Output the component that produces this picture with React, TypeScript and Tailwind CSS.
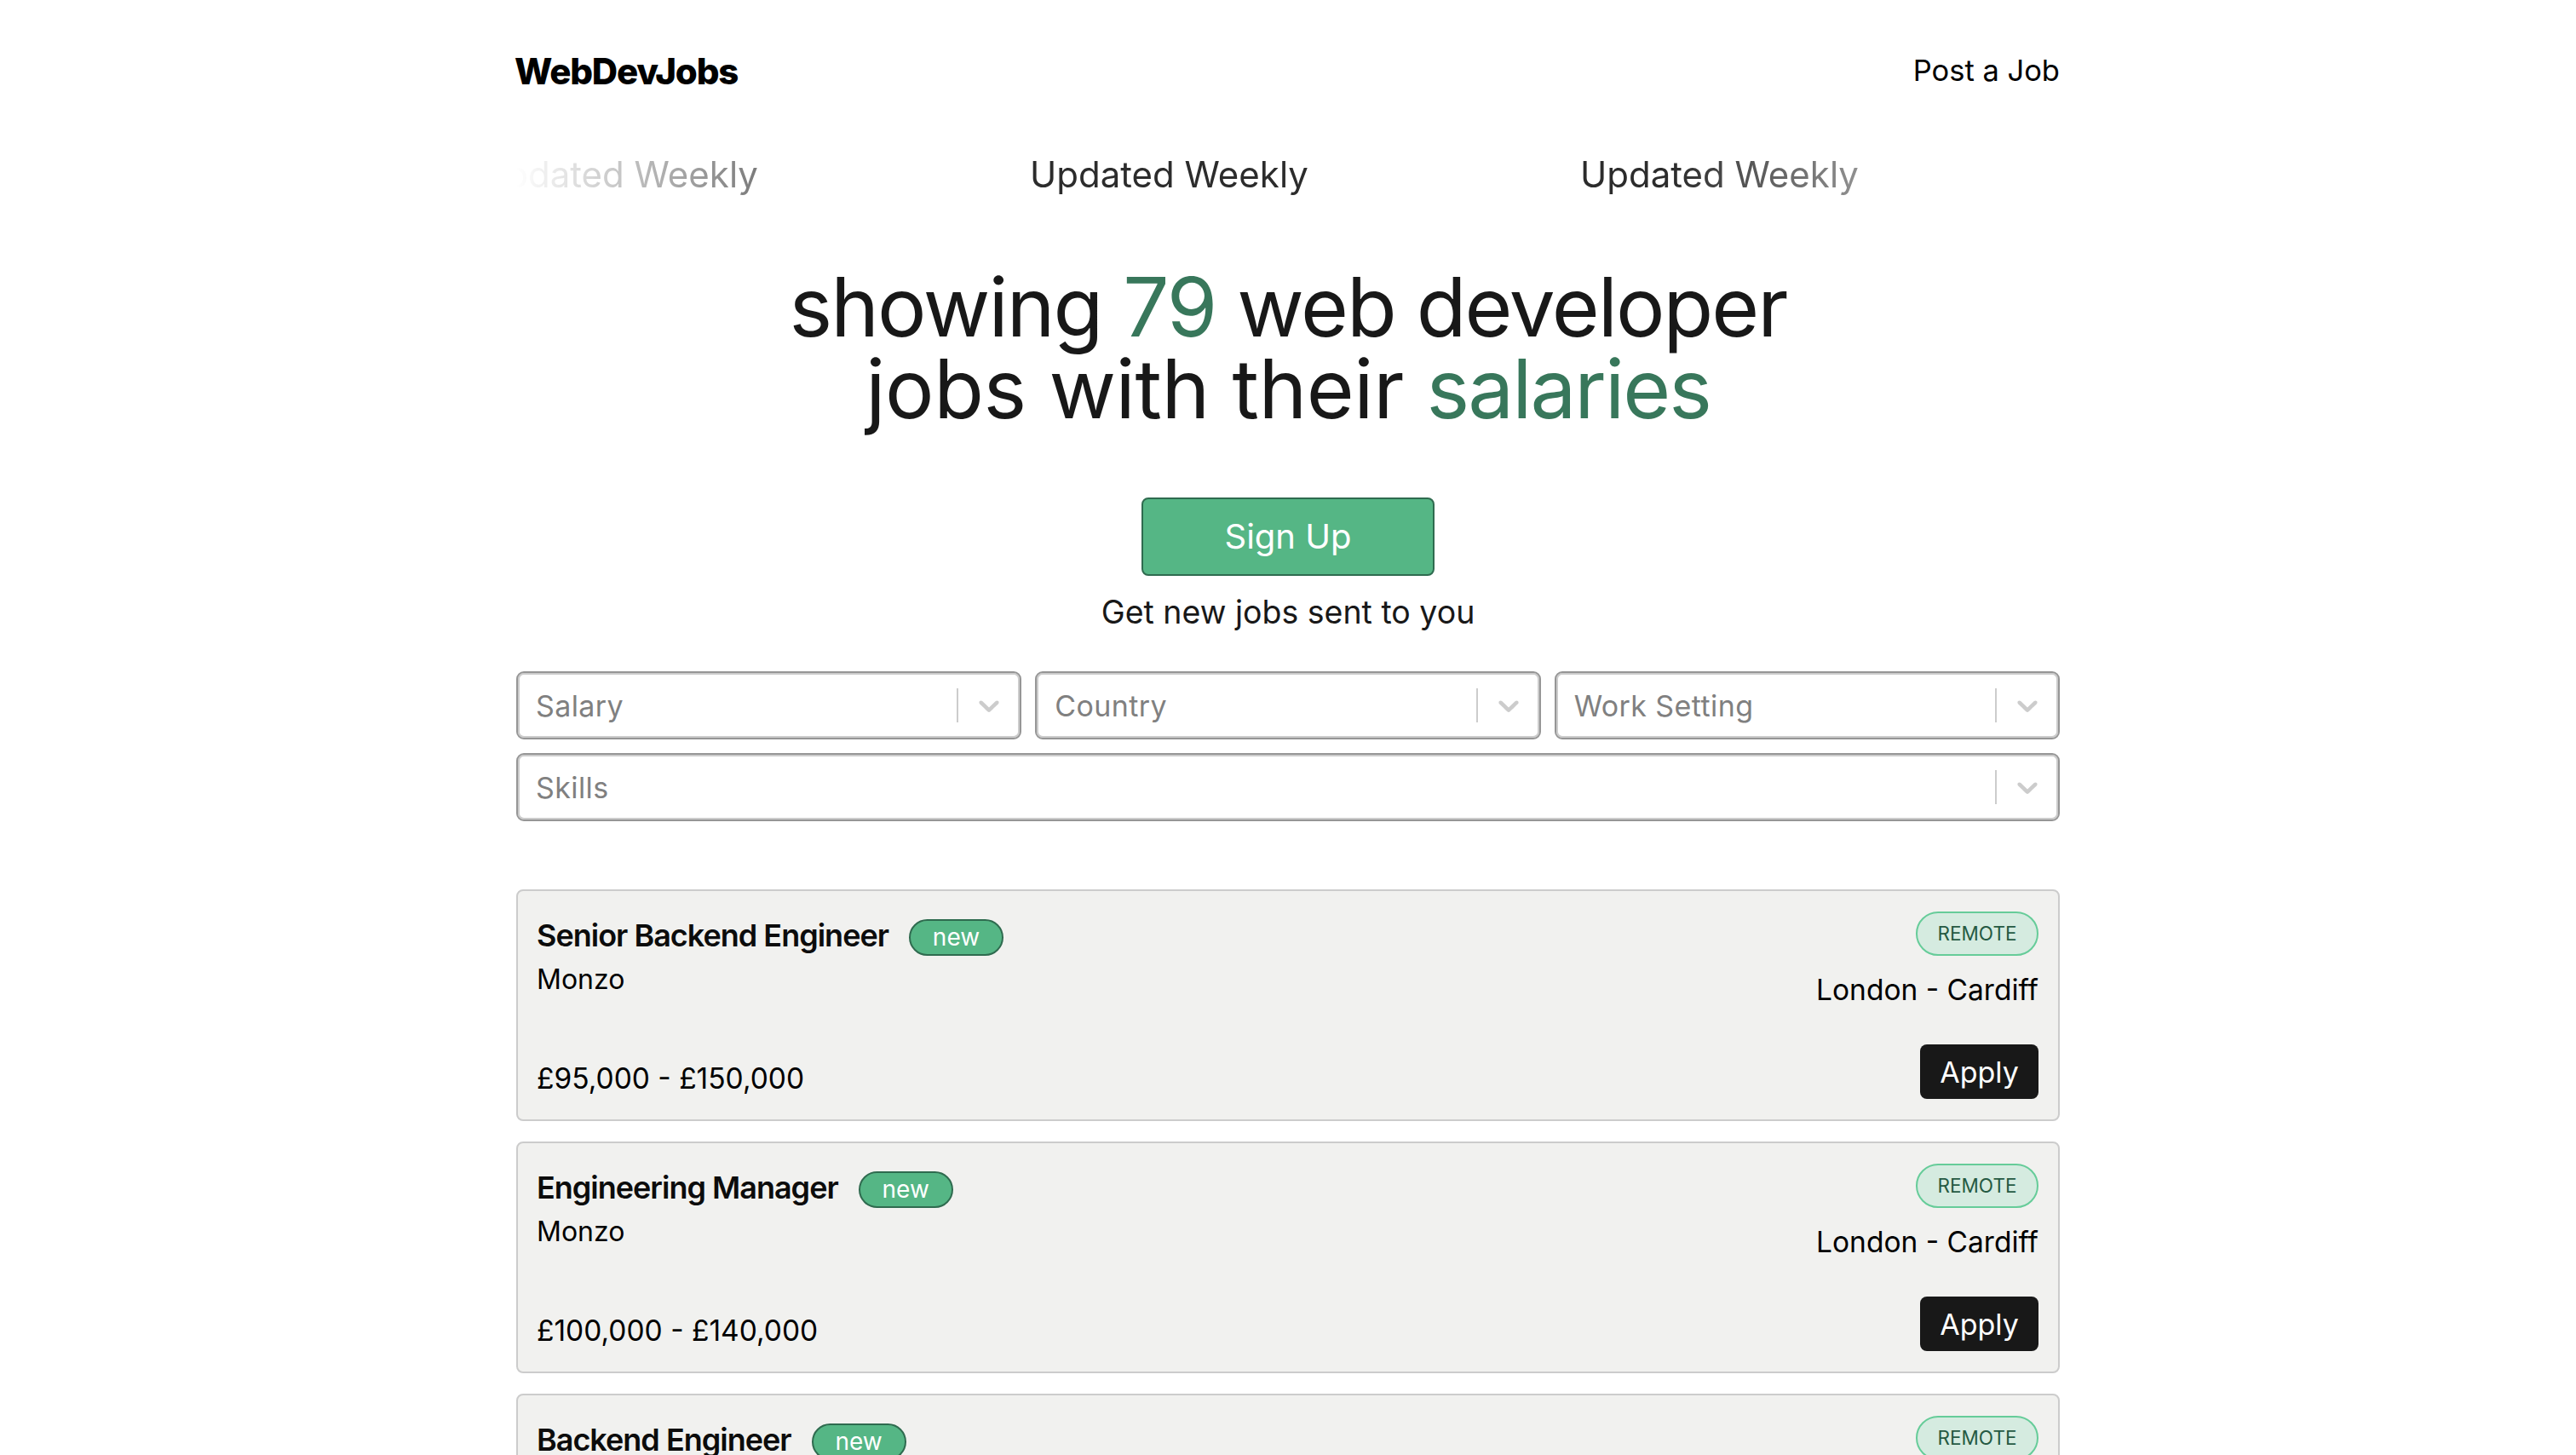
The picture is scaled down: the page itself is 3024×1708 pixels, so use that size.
import React from 'react';

const jobs = [
  { title: 'Senior Backend Engineer', company: 'Monzo', salary: '£95,000 - £150,000', location: 'London - Cardiff' },
  { title: 'Engineering Manager', company: 'Monzo', salary: '£100,000 - £140,000', location: 'London - Cardiff' },
  { title: 'Backend Engineer', company: 'Monzo', salary: '£80,000 - £120,000', location: 'London - Cardiff' },
];

function Chevron() {
  return (
    <svg viewBox="0 0 20 20" className="w-10 h-10 fill-[#cccccc]">
      <path d="M4.516 7.548c0.436-0.446 1.043-0.481 1.576 0l3.908 3.747 3.908-3.747c0.533-0.481 1.141-0.446 1.574 0 0.436 0.445 0.408 1.197 0 1.615-0.406 0.418-4.695 4.502-4.695 4.502-0.217 0.223-0.502 0.335-0.787 0.335s-0.57-0.112-0.789-0.335c0 0-4.287-4.084-4.695-4.502s-0.436-1.17 0-1.615z" />
    </svg>
  );
}

function Select({ label, className = '' }: { label: string; className?: string }) {
  return (
    <div className={`h-20 flex items-center bg-white rounded-[9px] border-2 border-[#969696] shadow-[inset_0_0_0_2px_#cccccc] ${className}`}>
      <span className="flex-1 pl-[21px] text-[34px] tracking-[0.4px] text-[#808080] font-['Inter']">{label}</span>
      <span className="w-0.5 h-10 bg-[#cccccc] -ml-0.5" />
      <span className="w-[72px] flex justify-center">
        <Chevron />
      </span>
    </div>
  );
}

function JobCard({ title, company, salary, location }: (typeof jobs)[number]) {
  return (
    <div className="h-[272px] shrink-0 flex justify-between bg-[#f1f1ef] border-2 border-[#cccccc] rounded-lg pl-[22px] pr-[23px] pt-6 pb-[24px] text-black font-['Inter']">
      <div className="flex flex-col">
        <div className="flex items-center h-[56px]">
          <span className="text-[36px] font-semibold tracking-[-1px] text-[#0c0c0c]">{title}</span>
          <span className="ml-6 mt-[4px] h-[43px] w-[111px] flex items-center justify-center rounded-full bg-[#55b685] border-2 border-[#2f6b4f] text-white text-[28px]">new</span>
        </div>
        <span className="text-[32px] leading-[44px] mt-[2px]">{company}</span>
        <span className="mt-auto mb-[2px] text-[33.5px] leading-[44px]">{salary}</span>
      </div>
      <div className="flex flex-col items-end">
        <span className="h-[52px] w-[144px] flex items-center justify-center rounded-full bg-[#d5ebe0] border-2 border-[#66cc99] text-[#265a43] text-[22.5px]">REMOTE</span>
        <span className="mt-[18px] text-[33.5px] leading-[44px]">{location}</span>
        <button className="mt-auto mb-0 h-16 w-[139px] rounded-lg bg-[#181818] text-white text-[34px]">Apply</button>
      </div>
    </div>
  );
}

export default function App() {
  return (
    <div className="h-screen overflow-hidden bg-white">
      <div className="w-[1812px] mx-auto flex flex-col">
        {/* Header */}
        <header className="h-[166px] flex items-center justify-between text-black font-['Inter']">
          <span className="text-[42px] font-extrabold tracking-[-1.2px] -ml-0.5">WebDevJobs</span>
          <span className="text-[34.5px]">Post a Job</span>
        </header>

        {/* Updated weekly ticker */}
        <div className="h-[76px] overflow-hidden flex items-center [mask-image:linear-gradient(to_right,transparent,black_25%,black_75%,transparent)]">
          <div className="flex gap-[320px] -ml-[43px] whitespace-nowrap text-[42px] text-[#2c2c2c] font-['Inter']">
            <span className="w-[326px]">Updated Weekly</span>
            <span className="w-[326px]">Updated Weekly</span>
            <span className="w-[326px]">Updated Weekly</span>
            <span className="w-[326px]">Updated Weekly</span>
          </div>
        </div>

        {/* Hero */}
        <h1 className="mt-[70px] text-center text-[96px] leading-[96px] font-normal text-[#181818] font-['Inter']">
          <span className="tracking-[-2px]">
            showing <span className="text-[#38775b]">79</span> web developer
          </span>
          <br />
          <span className="tracking-[-0.4px]">
            jobs with their <span className="text-[#38775b] tracking-[-2px]">salaries</span>
          </span>
        </h1>

        <button className="mt-[80px] self-center w-[344px] h-[92px] rounded-lg bg-[#55b685] border-2 border-[#2f6b4f] text-white text-[40px] font-['Inter']">
          Sign Up
        </button>
        <p className="mt-[18px] text-center text-[37.5px] leading-[50px] text-[#181818] font-['Inter']">Get new jobs sent to you</p>

        {/* Filters */}
        <div className="mt-[44px] grid grid-cols-3 gap-4">
          <Select label="Salary" />
          <Select label="Country" />
          <Select label="Work Setting" />
          <Select label="Skills" className="col-span-3" />
        </div>

        {/* Job list */}
        <div className="mt-[80px] flex flex-col gap-6">
          {jobs.map((job) => (
            <JobCard key={job.title} {...job} />
          ))}
        </div>
      </div>
    </div>
  );
}
